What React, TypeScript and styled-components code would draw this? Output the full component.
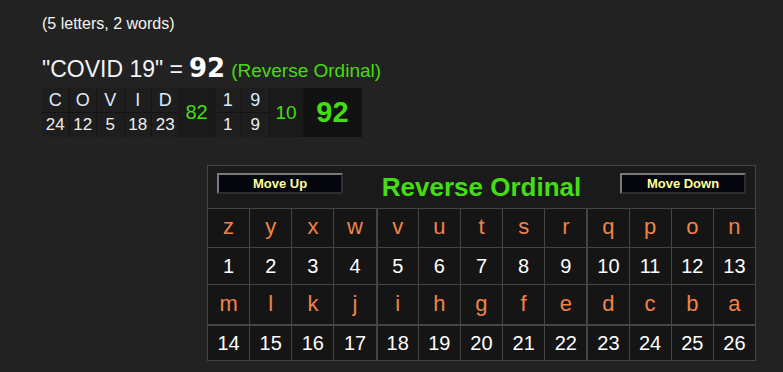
import React from "react";
import styled, { createGlobalStyle } from "styled-components";

const Global = createGlobalStyle`
  html, body { margin: 0; padding: 0; background: #222222; }
  body { font-family: "Liberation Sans", Arial, sans-serif; color: #eeeeee; }
`;

const Page = styled.div`
  padding: 15px 0 0 42px;
  width: 783px;
  height: 372px;
  box-sizing: border-box;
  overflow: hidden;
`;

const Info = styled.div`
  font-size: 16px;
  line-height: 18px;
  color: #f4f4ee;
`;

const ResultLine = styled.div`
  margin-top: 20px;
  display: flex;
  align-items: baseline;
  height: 28px;
  white-space: pre;
`;

const Phrase = styled.span`
  font-size: 23px;
  color: #f4f4f4;
`;

const BigValue = styled.span`
  font-family: "DejaVu Sans", "Liberation Sans", sans-serif;
  font-weight: bold;
  font-size: 26px;
  color: #ffffff;
  margin-left: 6px;
`;

const CipherName = styled.span`
  font-size: 19px;
  color: #44dd11;
  margin-left: 6px;
`;

const Breakdown = styled.div`
  margin-top: 7px;
  display: inline-flex;
  background: #141414;
  gap: 1px;
  height: 49px;
`;

const WordGrid = styled.div<{ $cols: number }>`
  display: grid;
  grid-template-columns: repeat(${(p) => p.$cols}, 26.5px);
  grid-template-rows: 24px 24px;
  gap: 1px;
`;

const BCell = styled.div<{ $letter?: boolean }>`
  background: #1e1e1e;
  display: flex;
  align-items: center;
  justify-content: center;
  font-size: ${(p) => (p.$letter ? "18px" : "17px")};
  color: ${(p) => (p.$letter ? "#dcecff" : "#eeeeee")};
`;

const SumCell = styled.div<{ $w: number; $size: number; $bold?: boolean; $dark?: boolean }>`
  width: ${(p) => p.$w}px;
  background: ${(p) => (p.$dark ? "#121212" : "#1a1a1a")};
  display: flex;
  align-items: center;
  justify-content: center;
  font-size: ${(p) => p.$size}px;
  font-weight: ${(p) => (p.$bold ? "bold" : "normal")};
  color: #44dd11;
`;

const Chart = styled.div`
  margin: 28px 0 0 165px;
  width: 549px;
  box-sizing: border-box;
  border: 1px solid #444444;
  background: #1a1a1a;
`;

const ChartHeader = styled.div`
  height: 43px;
  display: flex;
  align-items: center;
  justify-content: space-between;
  padding: 0 9px;
  border-bottom: 1px solid #444444;
  box-sizing: border-box;
`;

const MoveButton = styled.div`
  width: 126px;
  height: 21px;
  box-sizing: border-box;
  margin-top: -7px;
  background: #05050e;
  border-style: solid;
  border-width: 2px;
  border-color: #7a7a7a #2e2e2e #2e2e2e #7a7a7a;
  display: flex;
  align-items: center;
  justify-content: center;
  font-size: 13px;
  font-weight: bold;
  color: #ffff99;
`;

const ChartTitle = styled.div`
  font-size: 26px;
  font-weight: bold;
  color: #44dd11;
  margin-top: 1px;
`;

const Grid = styled.div`
  display: grid;
  grid-template-columns: repeat(13, 1fr);
  grid-template-rows: 38px 36px 39px 35px;
  gap: 1px;
  background: #444444;
`;

const GCell = styled.div<{ $letter?: boolean; $gapLeft?: boolean; $gapTop?: boolean }>`
  background: #151515;
  display: flex;
  align-items: center;
  justify-content: center;
  font-size: ${(p) => (p.$letter ? "22px" : "20px")};
  color: ${(p) => (p.$letter ? "#f0834a" : "#ffffff")};
  margin-left: ${(p) => (p.$gapLeft ? "1px" : "0")};
  margin-top: ${(p) => (p.$gapTop ? "1px" : "0")};
  padding-bottom: ${(p) => (p.$letter ? "2px" : "0")};
`;

const word1 = [
  ["C", "24"],
  ["O", "12"],
  ["V", "5"],
  ["I", "18"],
  ["D", "23"],
];
const word2 = [
  ["1", "1"],
  ["9", "9"],
];

const alphabet = "abcdefghijklmnopqrstuvwxyz".split("");
const reversed = [...alphabet].reverse();
const rows = [
  { letters: reversed.slice(0, 13), nums: Array.from({ length: 13 }, (_, i) => i + 1) },
  { letters: reversed.slice(13), nums: Array.from({ length: 13 }, (_, i) => i + 14) },
];

export default function App() {
  return (
    <>
      <Global />
      <Page>
        <Info>(5 letters, 2 words)</Info>
        <ResultLine>
          <Phrase>"COVID 19" =</Phrase>
          <BigValue>92</BigValue>
          <CipherName>(Reverse Ordinal)</CipherName>
        </ResultLine>
        <Breakdown>
          <WordGrid $cols={5}>
            {word1.map(([l]) => (
              <BCell key={"l" + l} $letter>
                {l}
              </BCell>
            ))}
            {word1.map(([l, n]) => (
              <BCell key={"n" + l}>{n}</BCell>
            ))}
          </WordGrid>
          <SumCell $w={34} $size={20}>
            82
          </SumCell>
          <WordGrid $cols={2}>
            {word2.map(([l]) => (
              <BCell key={"l" + l} $letter>
                {l}
              </BCell>
            ))}
            {word2.map(([l, n]) => (
              <BCell key={"n" + l}>{n}</BCell>
            ))}
          </WordGrid>
          <SumCell $w={33} $size={19}>
            10
          </SumCell>
          <SumCell $w={58} $size={29} $bold $dark>
            92
          </SumCell>
        </Breakdown>
        <Chart>
          <ChartHeader>
            <MoveButton>Move Up</MoveButton>
            <ChartTitle>Reverse Ordinal</ChartTitle>
            <MoveButton>Move Down</MoveButton>
          </ChartHeader>
          <Grid>
            {rows.map((r, ri) => (
              <React.Fragment key={ri}>
                {r.letters.map((l, ci) => (
                  <GCell key={"l" + l} $letter $gapLeft={ci === 4 || ci === 9}>
                    {l}
                  </GCell>
                ))}
                {r.nums.map((n, ci) => (
                  <GCell key={"n" + n} $gapLeft={ci === 4 || ci === 9} $gapTop={ri === 1}>
                    {n}
                  </GCell>
                ))}
              </React.Fragment>
            ))}
          </Grid>
        </Chart>
      </Page>
    </>
  );
}
